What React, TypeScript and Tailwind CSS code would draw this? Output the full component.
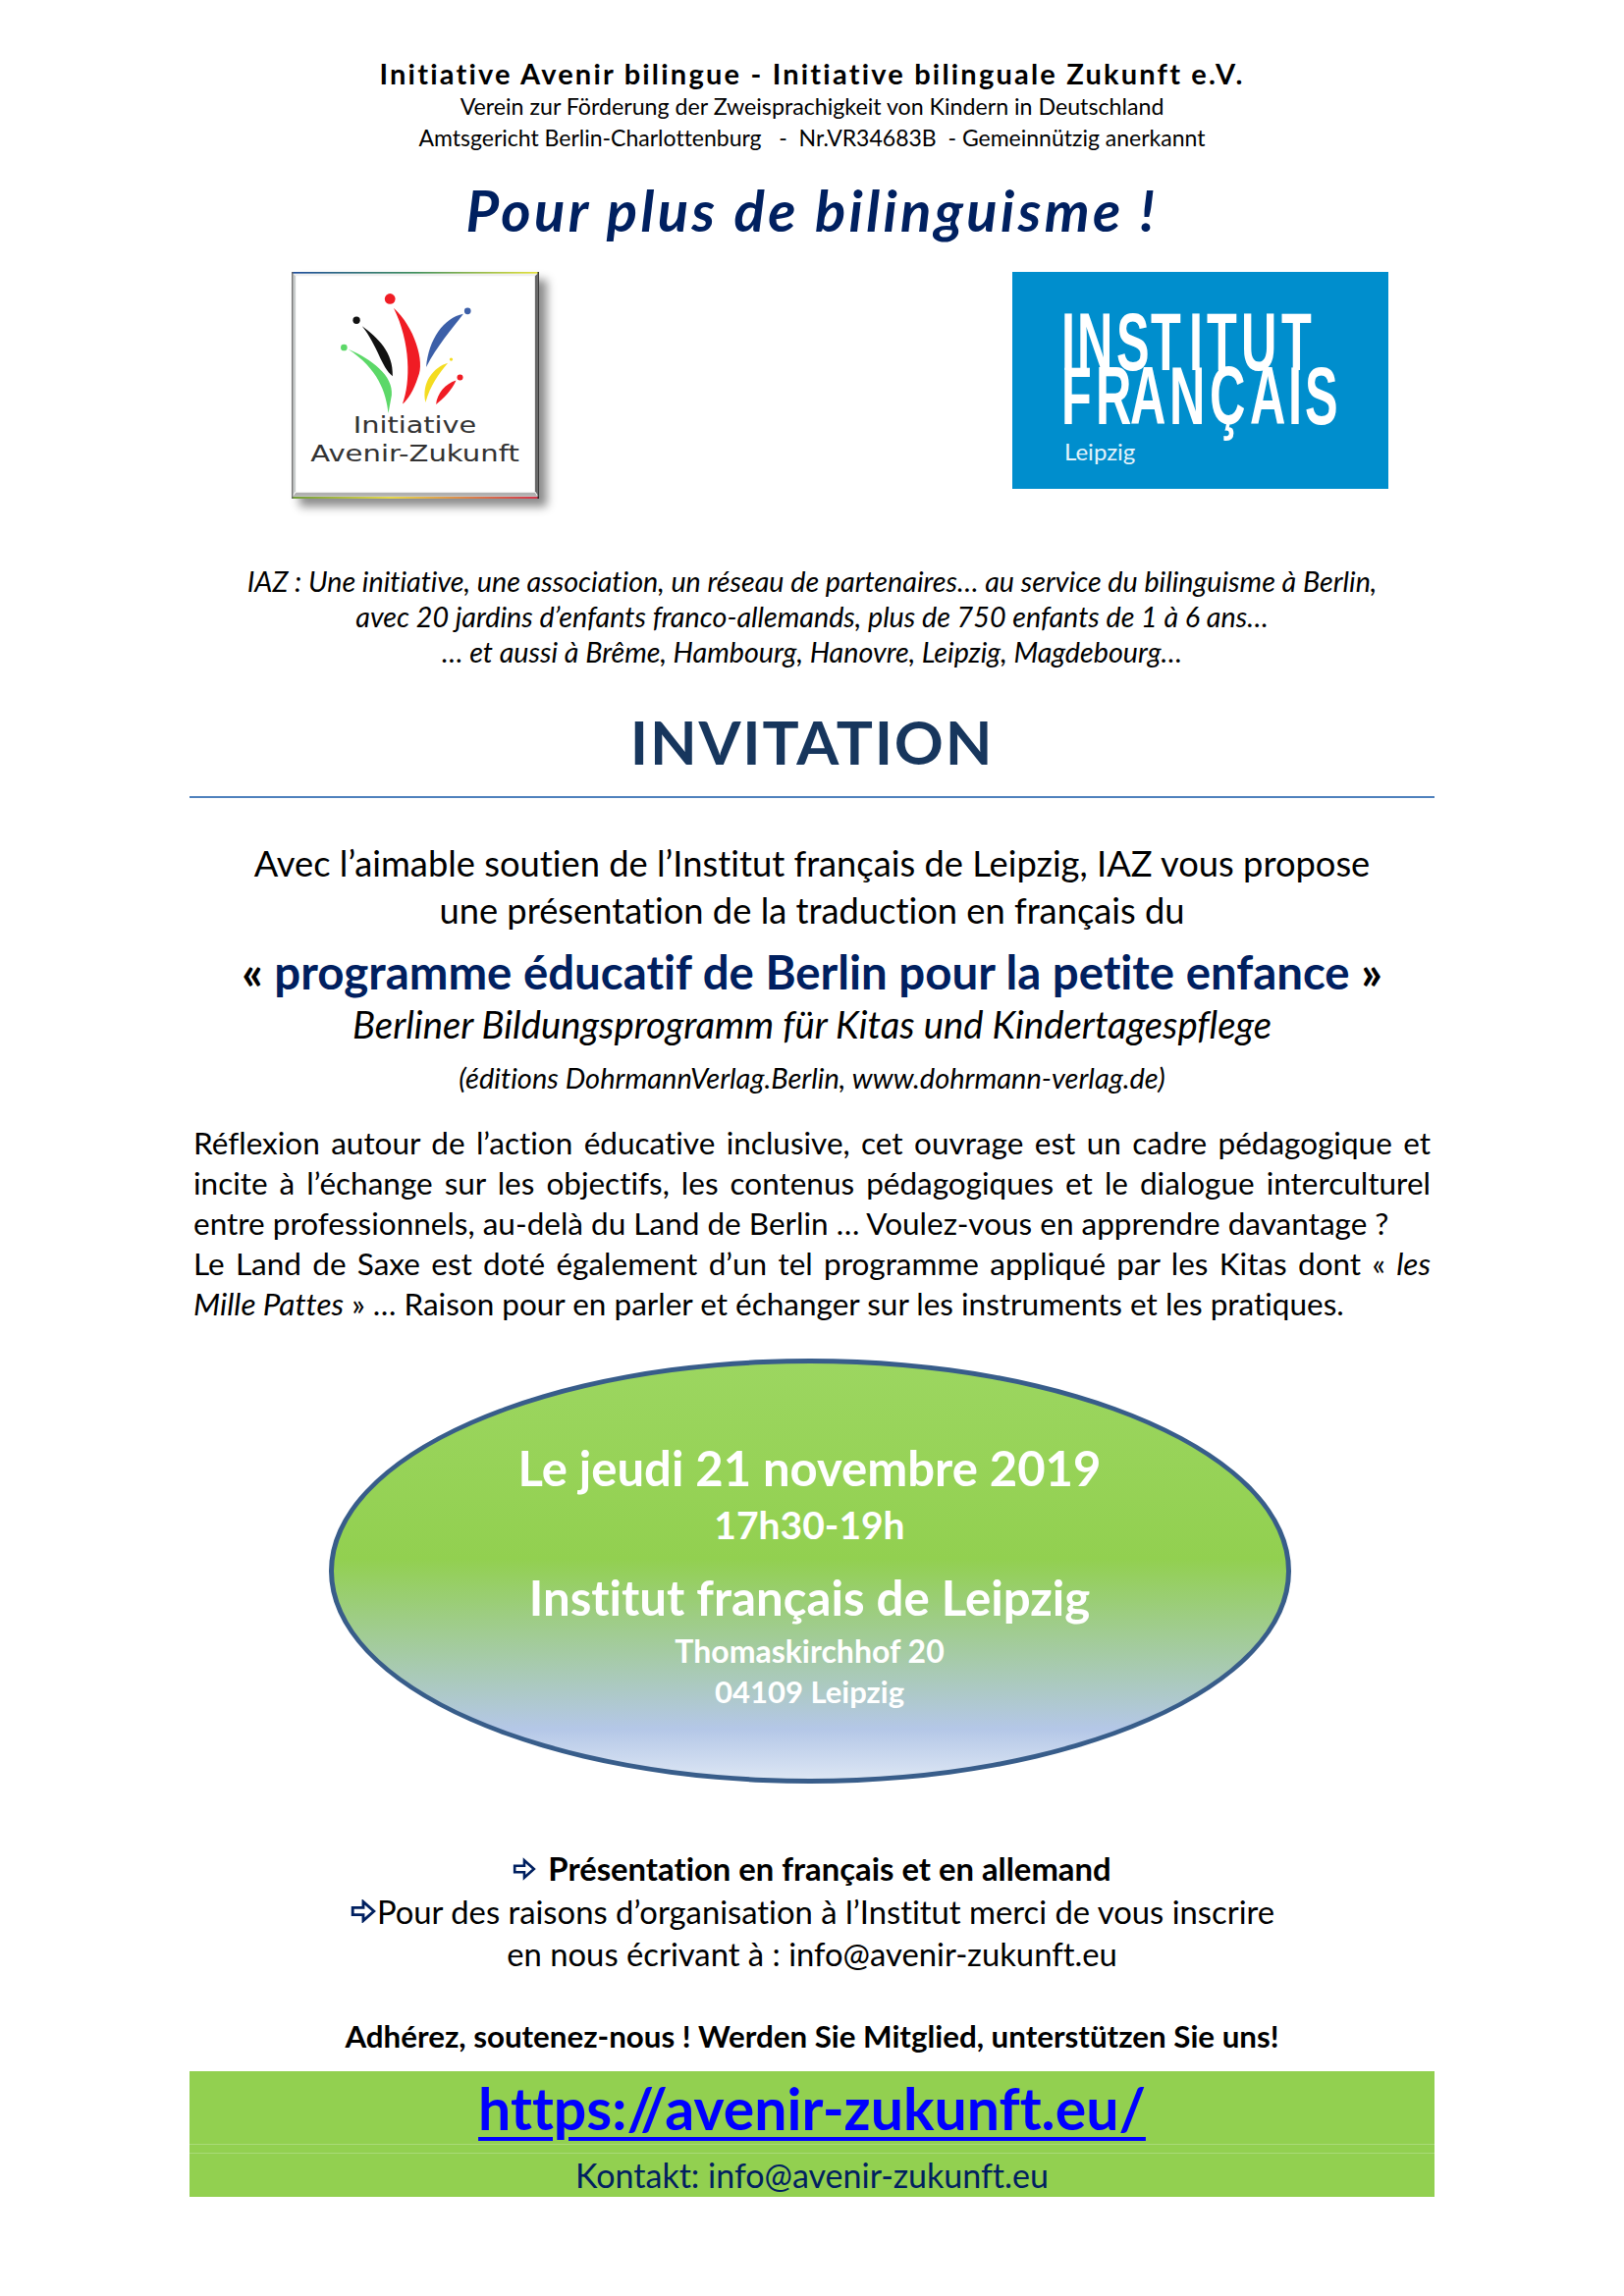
const Arrow = ({ className }: { className: string }) => (
    <svg viewBox="0 0 22 20" className={className}>
        <path
            d="M2 7h9V2l9 8-9 8v-5H2z"
            fill="#fff"
            stroke="#002060"
            strokeWidth="2.4"
        />
    </svg>
);

const IazLogo = () => (
    <div className="w-[252px] h-[231px] shadow-[8px_8px_9px_rgba(0,0,0,0.45)]">
        <svg viewBox="78 55 752 690" className="w-full h-full block">
            <defs>
                <linearGradient id="iaz-top" x1="0" x2="1" y1="0" y2="0">
                    <stop offset="0" stopColor="#1f4e9c" />
                    <stop offset="0.5" stopColor="#3f8f5c" />
                    <stop offset="1" stopColor="#e6e23a" />
                </linearGradient>
                <linearGradient id="iaz-bottom" x1="0" x2="1" y1="0" y2="0">
                    <stop offset="0" stopColor="#6f9c3a" />
                    <stop offset="0.4" stopColor="#e6d84a" />
                    <stop offset="1" stopColor="#d2344c" />
                </linearGradient>
            </defs>
            <rect x="78" y="55" width="752" height="690" fill="#fff" />
            <path d="M82 60h744l-8 8H90z" fill="#f0f0f0" />
            <path d="M82 60l8 8v654l-8 12z" fill="#c8cccc" />
            <path d="M826 60l-8 8v654l8 12z" fill="#666" />
            <path d="M82 738l8-12h728l8 12z" fill="#b0b0b0" />
            <rect x="78" y="55" width="752" height="5" fill="url(#iaz-top)" />
            <rect x="78" y="739" width="752" height="6" fill="url(#iaz-bottom)" />
            <rect x="78" y="55" width="4" height="690" fill="#666" />
            <rect x="826" y="55" width="4" height="690" fill="#222" />
            <circle cx="377" cy="137" r="16" fill="#f01c24" />
            <path d="M388 165C450 220 485 330 462 375 450 415 430 445 415 457 440 390 440 270 388 165Z" fill="#f01c24" />
            <circle cx="275" cy="202" r="11" fill="#111" />
            <path d="M292 220C340 255 388 300 385 372 350 345 340 280 292 220Z" fill="#111" />
            <circle cx="237" cy="285" r="10" fill="#5cd868" />
            <path d="M250 290C320 320 388 370 382 430L372 485C365 420 340 350 250 290Z" fill="#5cd868" />
            <circle cx="613" cy="174" r="10" fill="#3c5fa8" />
            <path d="M600 183C540 195 495 260 487 345 520 280 565 230 600 183Z" fill="#3c5fa8" />
            <circle cx="563" cy="321" r="5" fill="#f4dc20" />
            <path d="M553 332C510 345 472 390 485 452 500 400 525 365 553 332Z" fill="#f4dc20" />
            <circle cx="590" cy="376" r="9" fill="#f01c24" />
            <path d="M578 385C545 395 520 425 517 458 540 440 565 415 578 385Z" fill="#f01c24" />
            <text
                x="265"
                y="546"
                textLength="375"
                lengthAdjust="spacingAndGlyphs"
                fontFamily="'DejaVu Sans', sans-serif"
                fontSize="70"
                fill="#333"
            >
                Initiative
            </text>
            <text
                x="135"
                y="632"
                textLength="635"
                lengthAdjust="spacingAndGlyphs"
                fontFamily="'DejaVu Sans', sans-serif"
                fontSize="70"
                fill="#333"
            >
                Avenir-Zukunft
            </text>
        </svg>
    </div>
);

// letter starts of the wordmark, before the horizontal squeeze of 0.6
const instituteX = [50, 66, 106, 141, 180, 198, 233, 274].map((x) => x / 0.6).join(" ");
const francaisX = [50, 85, 120, 160, 201, 242, 281, 298].map((x) => x / 0.6).join(" ");

const InstitutLogo = () => (
    <svg viewBox="0 0 383 221" className="w-[383px] h-[221px] block bg-[#008ecd]">
        <g transform="scale(0.6 1)" fontFamily="'Liberation Sans', sans-serif" fontWeight="700" fontSize="84" fill="#fff">
            <text x={instituteX} y="100">INSTITUT</text>
            <text x={francaisX} y="155">FRANÇAIS</text>
        </g>
        <text x="53" y="192" fontFamily="Lato, sans-serif" fontSize="24" fill="#e4f3fb">
            Leipzig
        </text>
    </svg>
);

export default function App() {
    return (
        <div className="w-[1654px] h-[2339px] bg-white text-black font-['Lato',sans-serif] [font-variant-ligatures:none] flex flex-col items-center pt-[58px]">
            <div className="h-[34px] leading-[34px] text-[29px] font-bold tracking-[2.2px]">
                Initiative Avenir bilingue - Initiative bilinguale Zukunft e.V.
            </div>
            <div className="h-[33px] leading-[33px] text-[23.2px] whitespace-pre">
                Verein zur Förderung der Zweisprachigkeit von Kindern in Deutschland
            </div>
            <div className="h-[30px] leading-[30px] text-[23px] whitespace-pre">
                Amtsgericht Berlin-Charlottenburg   -  Nr.VR34683B  - Gemeinnützig anerkannt
            </div>
            <div className="mt-[24px] h-[70px] leading-[70px] text-[58px] font-bold italic tracking-[3.4px] text-[#002060]">
                Pour plus de bilinguisme !
            </div>

            <div className="mt-[28px] ml-[56px] w-[1117px] h-[233px] flex justify-between items-start">
                <IazLogo />
                <InstitutLogo />
            </div>

            <div className="mt-[64px] text-[28.7px] leading-[36px] italic text-center">
                <div>IAZ : Une initiative, une association, un réseau de partenaires… au service du bilinguisme à Berlin,</div>
                <div>avec 20 jardins d’enfants franco-allemands, plus de 750 enfants de 1 à 6 ans…</div>
                <div>… et aussi à Brême, Hambourg, Hanovre, Leipzig, Magdebourg…</div>
            </div>

            <div className="mt-[38px] w-[1268px] h-[91px] leading-[70px] text-center text-[62px] font-bold tracking-[1.8px] text-[#17365d] border-b-2 border-[#4f81bd] box-content">
                INVITATION
            </div>

            <div className="mt-[42px] text-[36.3px] leading-[48px] text-center">
                <div>Avec l’aimable soutien de l’Institut français de Leipzig, IAZ vous propose</div>
                <div>une présentation de la traduction en français du</div>
            </div>
            <div className="mt-[13px] h-[52px] leading-[52px] text-[47.4px] font-bold text-[#002060]">
                <span className="text-black">« </span>programme éducatif de Berlin pour la petite enfance<span className="text-black"> »</span>
            </div>
            <div className="h-[54px] leading-[54px] text-[38.3px] italic">
                Berliner Bildungsprogramm für Kitas und Kindertagespflege
            </div>
            <div className="mt-[1px] h-[54px] leading-[54px] text-[29px] italic">
                (éditions DohrmannVerlag.Berlin, www.dohrmann-verlag.de)
            </div>

            <div className="mt-[19px] w-[1260px] text-[31.5px] leading-[41px]">
                <div className="text-justify [text-align-last:justify]">Réflexion autour de l’action éducative inclusive, cet ouvrage est un cadre pédagogique et</div>
                <div className="text-justify [text-align-last:justify]">incite à l’échange sur les objectifs, les contenus pédagogiques et le dialogue interculturel</div>
                <div>entre professionnels, au-delà du Land de Berlin … Voulez-vous en apprendre davantage ?</div>
                <div className="text-justify [text-align-last:justify]">Le Land de Saxe est doté également d’un tel programme appliqué par les Kitas dont « <em>les</em></div>
                <div><em>Mille Pattes</em> » … Raison pour en parler et échanger sur les instruments et les pratiques.</div>
            </div>

            <div className="mt-[35px] mr-[5px] w-[980px] h-[433px] rounded-[50%] border-[5px] border-[#385d8a] bg-[linear-gradient(180deg,#9cd660_0%,#92d050_47%,#b4c7e7_88%,#dce6f4_100%)] flex flex-col items-center text-white font-bold pt-[72px]">
                <div className="h-[68px] leading-[68px] text-[49px]">Le jeudi 21 novembre 2019</div>
                <div className="h-[48px] leading-[48px] text-[39px]">17h30-19h</div>
                <div className="mt-[16px] h-[68px] leading-[68px] text-[49.2px]">Institut français de Leipzig</div>
                <div className="h-[41px] leading-[41px] text-[32px]">Thomaskirchhof 20</div>
                <div className="h-[42px] leading-[42px] text-[31px]">04109 Leipzig</div>
            </div>

            <div className="mt-[65px] text-[32.8px] leading-[43.5px] text-center">
                <div className="flex items-center justify-center gap-[12px] font-bold">
                    <Arrow className="w-[24px] h-[24px]" />
                    <span>Présentation en français et en allemand</span>
                </div>
                <div className="flex items-center justify-center">
                    <Arrow className="w-[28px] h-[24px]" />
                    <span>Pour des raisons d’organisation à l’Institut merci de vous inscrire</span>
                </div>
                <div>en nous écrivant à : info@avenir-zukunft.eu</div>
            </div>

            <div className="mt-[41px] h-[40px] leading-[40px] text-[31.3px] font-bold">
                Adhérez, soutenez-nous ! Werden Sie Mitglied, unterstützen Sie uns!
            </div>

            <div className="mt-[16px] w-[1268px] h-[128px] bg-[#92d050] flex flex-col items-center">
                <a href="#" className="h-[74px] leading-[76px] text-[59px] font-bold text-[#0000ff] underline decoration-[4px] underline-offset-[7px]">
                    https://avenir-zukunft.eu/
                </a>
                <div className="w-full h-[10px] border-y border-[#a9da78]" />
                <div className="h-[44px] leading-[44px] text-[34px] text-[#002060]">
                    Kontakt: info@avenir-zukunft.eu
                </div>
            </div>
        </div>
    );
}
